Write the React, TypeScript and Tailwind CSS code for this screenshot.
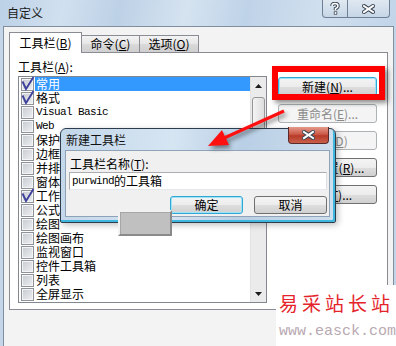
import React from 'react';

type Toolbar = { name: string; checked?: boolean; latin?: boolean };

const toolbars: Toolbar[] = [
  { name: '常用', checked: true },
  { name: '格式', checked: true },
  { name: 'Visual Basic', latin: true },
  { name: 'Web', latin: true },
  { name: '保护' },
  { name: '边框' },
  { name: '并排比较' },
  { name: '窗体' },
  { name: '工作表菜单栏', checked: true },
  { name: '公式审核' },
  { name: '绘图' },
  { name: '绘图画布' },
  { name: '监视窗口' },
  { name: '控件工具箱' },
  { name: '列表' },
  { name: '全屏显示' },
];

const mono = "font-['Liberation_Mono',monospace] text-[11px] tracking-[-0.6px]";

const CheckBox = ({ checked }: { checked?: boolean }) => (
  <span className="relative block h-[13px] w-[13px] shrink-0 border border-[#8f9399] bg-[linear-gradient(135deg,#c6cad0,#eef0f2)] shadow-[inset_0_0_0_1px_#f3f4f6]">
    {checked && (
      <svg className="absolute left-[-1px] top-[-3px]" width="14" height="16" viewBox="0 0 14 16">
        <path d="M1.5 5.5 L5 13 L12.5 1" fill="none" stroke="#3f3f9c" strokeWidth="1.9" />
      </svg>
    )}
  </span>
);

// white glyph with a dark outline, like the Aero caption buttons
const CaptionX = ({ w, h }: { w: number; h: number }) => (
  <svg width={w} height={h} viewBox={`0 0 ${w} ${h}`}>
    <path d={`M2 2 L${w - 2} ${h - 2} M${w - 2} 2 L2 ${h - 2}`} stroke="#3b4656" strokeWidth="4" strokeLinecap="square" />
    <path d={`M2 2 L${w - 2} ${h - 2} M${w - 2} 2 L2 ${h - 2}`} stroke="#ffffff" strokeWidth="2" strokeLinecap="square" />
  </svg>
);

const Help = () => (
  <svg width="10" height="13" viewBox="0 0 10 13">
    <path d="M2 4 Q2 1.5 5 1.5 Q8 1.5 8 4 Q8 5.6 5.5 6.6 L5.5 8.2" fill="none" stroke="#3b4656" strokeWidth="3.4" />
    <path d="M2 4 Q2 1.5 5 1.5 Q8 1.5 8 4 Q8 5.6 5.5 6.6 L5.5 8.2" fill="none" stroke="#ffffff" strokeWidth="1.5" />
    <rect x="3.8" y="9.4" width="3.4" height="3.2" fill="#3b4656" />
    <rect x="4.6" y="10.1" width="1.8" height="1.8" fill="#ffffff" />
  </svg>
);

export default function App() {
  return (
    <div className="relative flex h-[346px] w-[396px] flex-col overflow-hidden bg-[#f3f3f3] font-['Noto_Sans_CJK_SC',sans-serif] text-[12px] leading-[14px] text-black">
      {/* title bar */}
      <div className="flex h-[26px] shrink-0 items-start justify-between bg-[linear-gradient(100deg,#bcd1e7_0%,#d1e0ef_16%,#bdd1e6_30%,#d5e3f0_47%,#bfd3e8_62%,#d0dfee_80%,#c2d5e9_100%)]">
        <span className="pl-[7px] pt-[6px] text-[#1b1b1b]">自定义</span>
        <div className="mr-[6px] flex h-[18px]">
          <div className="flex w-[26px] items-center justify-center rounded-bl-[4px] border border-t-0 border-[#6e8096] bg-[linear-gradient(#dfe8f1,#c7d6e6)]">
            <Help />
          </div>
          <div className="flex w-[42px] items-center justify-center rounded-br-[4px] border border-l-0 border-t-0 border-[#6e8096] bg-[linear-gradient(#dfe8f1,#c7d6e6)]">
            <CaptionX w={13} h={10} />
          </div>
        </div>
      </div>

      {/* dialog body */}
      <div className="flex flex-1 border-l-[3px] border-r-[2px] border-[#c3d5e7]">
        <div className="flex flex-1 flex-col border-l border-r border-t border-[#7f8fa0] pl-[5px] pt-[5px]">
          <div className="flex h-[20px] items-end">
            <div className="relative z-10 -mb-px flex h-[21px] w-[73px] items-center justify-center border border-b-0 border-[#898c95] bg-white">
              工具栏(<u>B</u>)
            </div>
            <div className="flex h-[17px] w-[58px] items-center justify-center border border-b-0 border-l-0 border-[#898c95] bg-[linear-gradient(#f3f3f3,#e6e6e6_50%,#dadada_51%,#cfcfcf)]">
              命令(<u>C</u>)
            </div>
            <div className="flex h-[17px] w-[59px] items-center justify-center border border-b-0 border-l-0 border-[#898c95] bg-[linear-gradient(#f3f3f3,#e6e6e6_50%,#dadada_51%,#cfcfcf)]">
              选项(<u>O</u>)
            </div>
          </div>

          <div className="flex h-[258px] w-[379px] border border-[#898c95] bg-white pl-[8px] pt-[7px]">
            <div className="flex flex-col">
              <div className="h-[14px]">工具栏(<u>A</u>):</div>
              <div className="mt-[2px] flex h-[227px] w-[249px] border border-[#828790]">
                <div className="flex flex-1 flex-col">
                  {toolbars.map((t, i) => (
                    <div key={t.name} className="flex h-[14px] items-center pl-[2px]">
                      <CheckBox checked={t.checked} />
                      <span
                        className={
                          i === 0
                            ? 'ml-[1px] flex h-full flex-1 items-center whitespace-nowrap bg-[#3399ff] pl-[1px] text-white'
                            : 'ml-[1px] flex h-full flex-1 items-center whitespace-nowrap pl-[1px]'
                        }
                      >
                        {t.latin ? <span className={mono}>{t.name}</span> : t.name}
                      </span>
                    </div>
                  ))}
                </div>
                <div className="flex w-[16px] flex-col border-l border-[#e2e2e2] bg-[#ebebeb]">
                  <div className="flex h-[17px] items-center justify-center">
                    <svg width="7" height="4" viewBox="0 0 7 4">
                      <path d="M0 4 L3.5 0 L7 4Z" fill="#1c1c1c" />
                    </svg>
                  </div>
                  <div className="mx-[1px] mt-[3px] h-[112px] rounded-[3px] border border-[#979797] bg-[linear-gradient(90deg,#f4f4f4,#dedede)]" />
                  <div className="mt-auto flex h-[17px] items-center justify-center">
                    <svg width="7" height="4" viewBox="0 0 7 4">
                      <path d="M0 0 L3.5 4 L7 0Z" fill="#1c1c1c" />
                    </svg>
                  </div>
                </div>
              </div>
            </div>

            <div className="ml-[11px] mt-[17px] flex flex-col gap-[8px]">
              <div className="flex h-[19px] w-[99px] items-center justify-center rounded-[3px] border border-[#2fa8d6] bg-[linear-gradient(#f4f4f4,#ececec_50%,#dedede_51%,#d0d0d0)] shadow-[inset_0_0_0_1px_#9ee3f8]">
                新建(<u>N</u>)...
              </div>
              <div className="flex h-[19px] w-[99px] items-center justify-center rounded-[3px] border border-[#adb2b5] bg-[#f4f4f4] text-[#8a8a8a]">
                重命名(<u>E</u>)...
              </div>
              <div className="flex h-[19px] w-[99px] items-center justify-center rounded-[3px] border border-[#adb2b5] bg-[#f4f4f4] text-[#8a8a8a]">
                删除(<u>D</u>)
              </div>
              <div className="flex h-[19px] w-[99px] items-center justify-center rounded-[3px] border border-[#707070] bg-[linear-gradient(#f4f4f4,#ececec_50%,#dedede_51%,#d0d0d0)]">
                重新设置(<u>R</u>)...
              </div>
              <div className="flex h-[19px] w-[99px] items-center justify-center rounded-[3px] border border-[#707070] bg-[linear-gradient(#f4f4f4,#ececec_50%,#dedede_51%,#d0d0d0)]">
                附加(<u>T</u>)...
              </div>
            </div>
          </div>
        </div>
      </div>

      {/* red highlight round the 新建 button */}
      <div className="absolute left-[272px] top-[66px] h-[34px] w-[113px] border-[6px] border-[#ff0000] shadow-[3px_3px_5px_rgba(0,0,0,0.45)]" />

      {/* 新建工具栏 dialog */}
      <div className="absolute left-[60px] top-[128px] flex h-[95px] w-[276px] flex-col rounded-t-[6px] rounded-b-[2px] border border-[#2e3d4d] bg-[linear-gradient(95deg,#c3d7ea,#d6e5f2_40%,#b9cfe5_65%,#cfdfee)] shadow-[inset_-2px_-2px_0_#3fb6de,2px_2px_6px_rgba(0,0,0,0.25)]">
        <div className="flex h-[21px] items-center pl-[5px] text-[#111]">新建工具栏</div>
        <div className="absolute right-[6px] top-[-2px] flex h-[17px] w-[41px] items-center justify-center rounded-b-[4px] border border-t-0 border-[#5a2a2a] bg-[linear-gradient(#e49a8c,#cc5a48_45%,#b83a28_55%,#c7604c)]">
          <CaptionX w={13} h={10} />
        </div>
        <div className="mb-[5px] ml-[4px] mr-[5px] flex flex-1 flex-col border border-[#8ea3b8] bg-[#f0f0f0] pl-[3px] pt-[6px]">
          <div className="h-[14px] pl-[1px]">工具栏名称(<u>T</u>):</div>
          <div className="mt-[1px] flex h-[18px] w-[258px] items-center border border-[#abadb3] border-b-[#e3e9ef] border-r-[#dbdfe6] bg-white pl-[2px]">
            <span className={mono}>purwind</span>的工具箱
          </div>
          <div className="mt-[6px] flex justify-end gap-[11px] pr-[2px]">
            <div className="flex h-[18px] w-[73px] items-center justify-center rounded-[3px] border border-[#2fa8d6] bg-[linear-gradient(#f4f4f4,#ececec_50%,#dedede_51%,#d0d0d0)] shadow-[inset_0_0_0_1px_#9ee3f8]">
              确定
            </div>
            <div className="flex h-[18px] w-[73px] items-center justify-center rounded-[3px] border border-[#707070] bg-[linear-gradient(#f4f4f4,#ececec_50%,#dedede_51%,#d0d0d0)]">
              取消
            </div>
          </div>
        </div>
      </div>

      {/* dragged toolbar ghost */}
      <div className="absolute left-[118px] top-[210px] h-[26px] w-[54px] border-2 border-b-[#8a8a8a] border-l-[#f2f2f2] border-r-[#8a8a8a] border-t-[#f2f2f2] bg-[#c0c0c0] shadow-[inset_1px_1px_0_#a6a6a6]" />

      {/* red arrow */}
      <svg
        className="absolute left-[200px] top-[104px] drop-shadow-[2px_3px_2px_rgba(0,0,0,0.45)]"
        width="90"
        height="50"
        viewBox="200 104 90 50"
      >
        <path d="M284 111 L222 139" stroke="#ff1010" strokeWidth="3.2" />
        <path d="M208 146 L222 130 L229 145Z" fill="#ff1010" />
      </svg>

      {/* watermark */}
      <div className="absolute left-[276px] top-[285px] flex h-[61px] w-[120px] flex-col bg-white pl-[3px]">
        <div className="mt-[5px] h-[26px] whitespace-nowrap text-[19px] leading-[26px] tracking-[4px] text-[#e5232b]">易采站长站</div>
        <div className="mt-[8px] whitespace-nowrap font-['Liberation_Mono',monospace] text-[15px] leading-[16px] text-[#b9a9b2]">www.easck.com</div>
      </div>
    </div>
  );
}
